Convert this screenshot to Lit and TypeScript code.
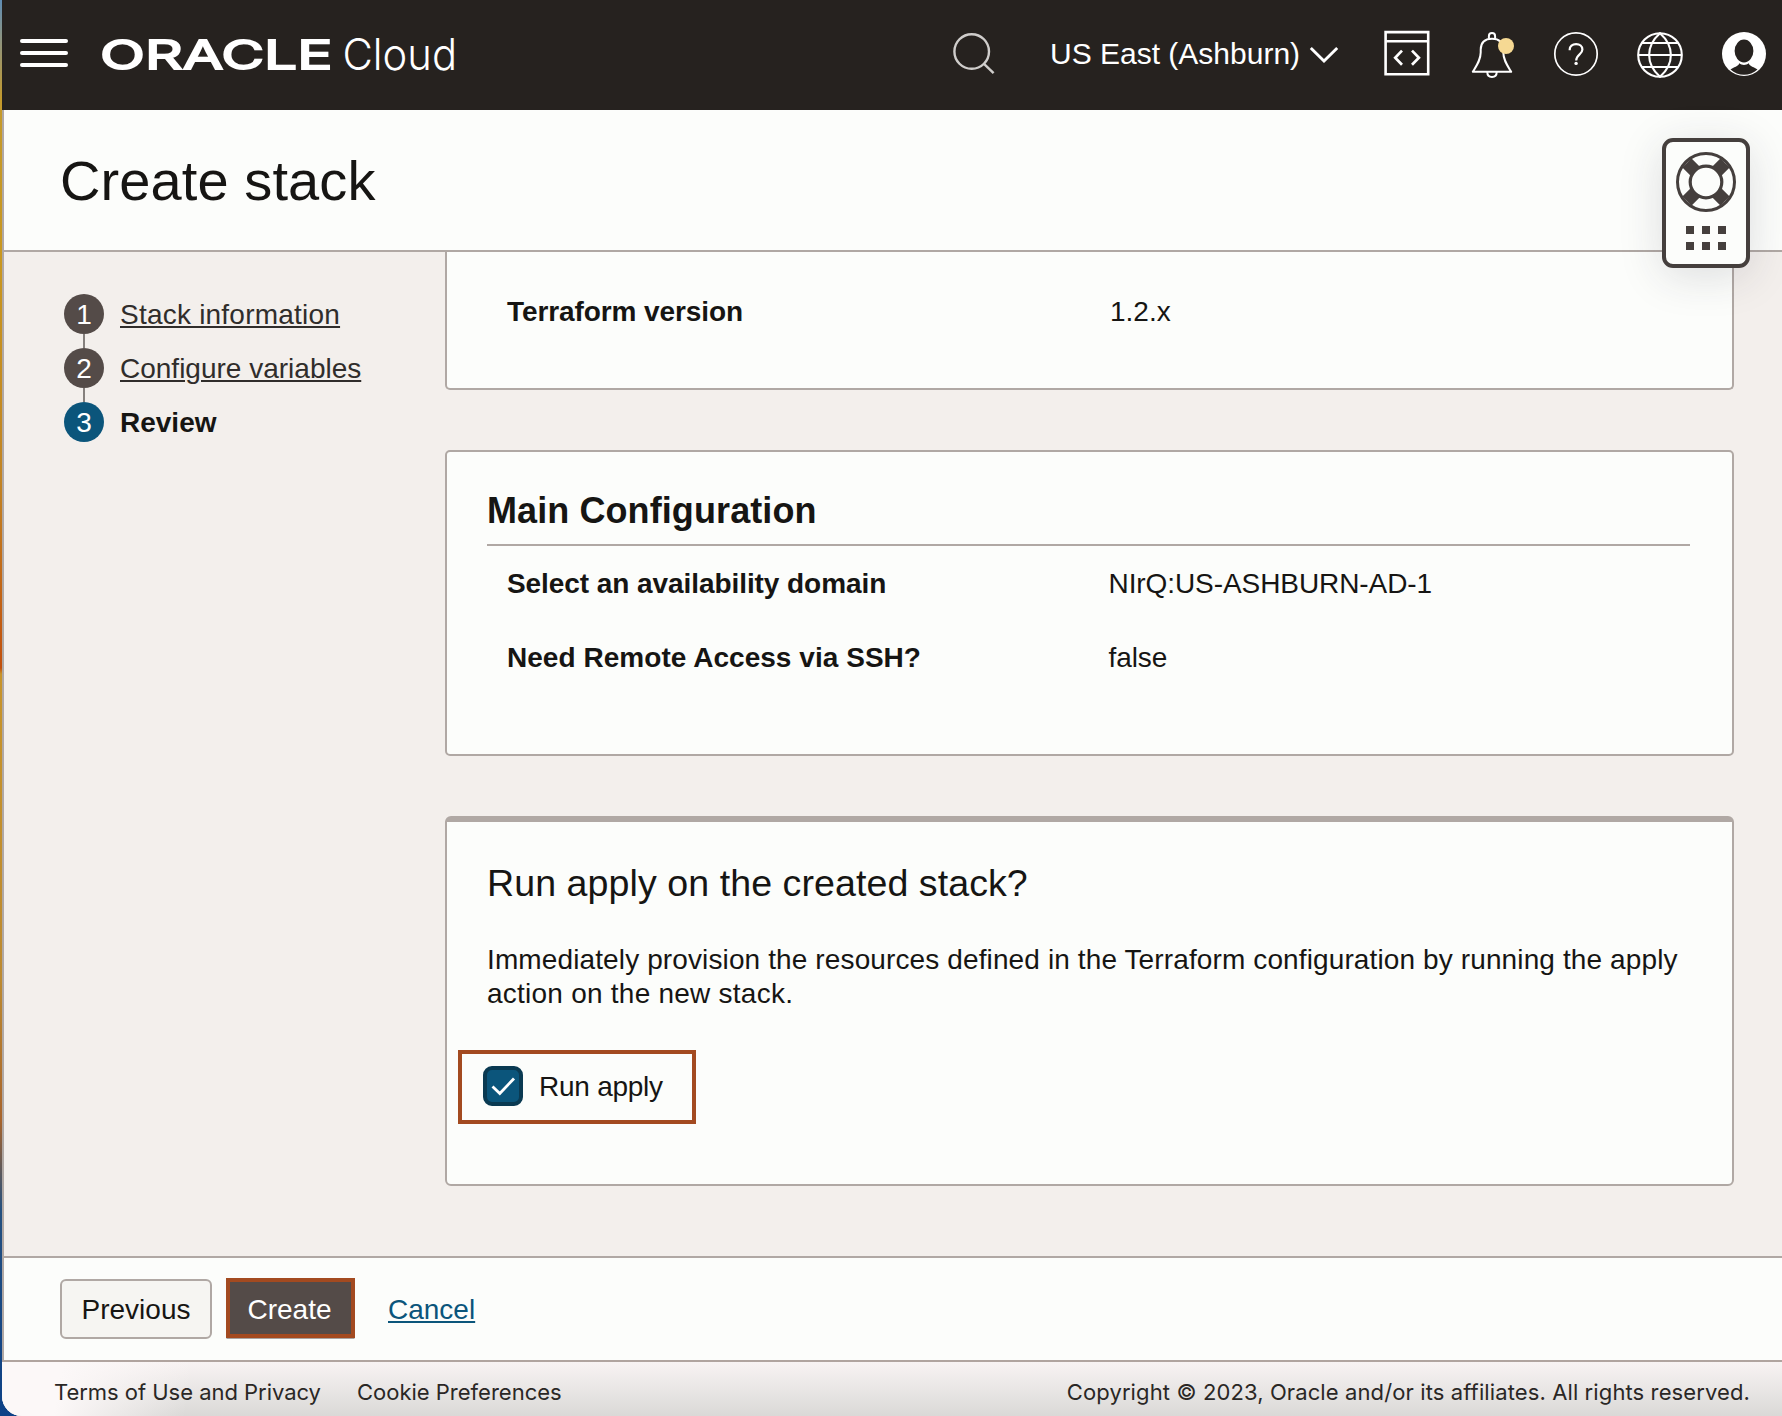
import { LitElement, html, css, svg } from "lit";
import { customElement, property, state } from "lit/decorators.js";
import { classMap } from "lit/directives/class-map.js";

/* Top bar icons share a 48x48 box. */
const icons = {
  search: svg`<g fill="none" stroke="#cfcdcb" stroke-width="2.4">
    <circle cx="21.7" cy="21.5" r="17.3"/><path d="M34 33.8 43.6 43.2"/></g>`,
  code: svg`<g fill="none" stroke="#fff" stroke-width="2.6">
    <path d="M1.6 2.1H44.2V44.2H1.6ZM1.6 11.3H44.2"/>
    <path d="M18 20.6 11.2 27.7 18 34.8M28 20.6 34.9 27.7 28 34.8" stroke-width="2.7"/></g>`,
  bell: svg`<g fill="none" stroke="#fff" stroke-width="2" stroke-linejoin="round">
    <path d="M4.8 41.8C9 35 12.6 30 12.7 22.5V19.5C12.9 12.5 17 8.8 24 8.8S35.1 12.5 35.3 19.5V22.5C35.4 30 39 35 43.2 41.8Z"/>
    <path d="M20.9 8.8V6.2A3.1 3.1 0 0 1 27.1 6.2V8.8"/>
    <path d="M19.3 42C19.3 45 21.3 46.9 24 46.9S28.7 45 28.7 42"/></g>
    <circle cx="38" cy="16" r="8" fill="#f6d993"/>`,
  help: svg`<g fill="none" stroke="#fff">
    <circle cx="24" cy="24" r="21.2" stroke-width="1.7"/>
    <path d="M17.7 20.2V19.6C17.7 16.2 20.3 14.2 24.1 14.2C27.8 14.2 30.4 16.4 30.4 19.6C30.4 24.6 24.2 24.2 24.2 30.6" stroke-width="2.2"/></g>
    <circle cx="24.1" cy="33.4" r="1.7" fill="#fff"/>`,
  globe: svg`<g fill="none" stroke="#fff" stroke-width="2.1">
    <circle cx="24" cy="25" r="21.8"/>
    <path d="M24 3.2C9.5 16 9.5 34 24 46.8C38.5 34 38.5 16 24 3.2ZM2.2 25H45.8M6 13H42M6 37H42"/></g>`,
  user: svg`<circle cx="24" cy="24" r="22" fill="#fff"/>
    <path d="M10.5 39.6C13.5 36.8 18.5 36.6 19.2 33.2C22 35.5 26 35.5 28.8 33.2C29.5 36.6 34.5 36.8 37.5 39.6C30 46.6 18 46.6 10.5 39.6Z" fill="#26221f"/>
    <ellipse cx="24" cy="21" rx="9.4" ry="11.4" fill="#26221f"/>`,
};

@customElement("oc-icon")
class OcIcon extends LitElement {
  static styles = css`
    :host { display: block; width: 48px; height: 48px; }
    svg { display: block; }
  `;
  @property() name: keyof typeof icons = "search";
  render() {
    return html`<svg width="48" height="48" viewBox="0 0 48 48">${icons[this.name]}</svg>`;
  }
}

@customElement("oc-topbar")
class OcTopbar extends LitElement {
  static styles = css`
    :host {
      display: flex; align-items: center; box-sizing: border-box; height: 110px;
      padding: 0 14px 2px 18px; background: #26221f; color: #fff;
      font-family: "Liberation Sans", Arial, sans-serif;
    }
    .menu { display: grid; gap: 8px; width: 48px; margin-right: 28px; padding-bottom: 2px; }
    .menu i { height: 4px; border-radius: 2px; background: #fff; }
    .logo { display: block; }
    .oracle { font: 370 40px Inter, sans-serif; fill: #fff; stroke: #fff; stroke-width: 1.8; }
    .cloud { font: 260 44px Inter, sans-serif; fill: #fff; }
    .search { margin-left: 484px; }
    .region { display: flex; align-items: center; gap: 9px; margin-left: 52px; font-size: 30px; line-height: 40px; white-space: nowrap; }
    .actions { display: flex; gap: 36px; margin-left: auto; }
  `;
  render() {
    return html`
      <div class="menu"><i></i><i></i><i></i></div>
      <svg class="logo" width="370" height="60" viewBox="0 0 370 60">
        <text class="oracle" x="4" y="45" textLength="232.5" lengthAdjust="spacingAndGlyphs">ORACLE</text>
        <text class="cloud" x="246.5" y="46" textLength="114.5" lengthAdjust="spacingAndGlyphs">Cloud</text>
      </svg>
      <oc-icon class="search" name="search"></oc-icon>
      <div class="region">
        <span>US East (Ashburn)</span>
        <svg width="30" height="18" viewBox="0 0 30 18"><path d="M1.8 3 15 16 28.2 3" fill="none" stroke="#fff" stroke-width="2.9"/></svg>
      </div>
      <div class="actions">
        ${(["code", "bell", "help", "globe", "user"] as const).map((n) => html`<oc-icon name=${n}></oc-icon>`)}
      </div>`;
  }
}

@customElement("oc-help-widget")
class OcHelpWidget extends LitElement {
  static styles = css`
    :host {
      display: flex; flex-direction: column; align-items: center; box-sizing: border-box;
      width: 88px; height: 130px; padding-top: 10px; gap: 14px;
      border: 4px solid #453f3d; border-radius: 11px; background: #fcfdfb;
      box-shadow: 0 8px 44px rgba(40, 40, 60, 0.15);
    }
    svg { display: block; }
    .dots { display: grid; grid-template-columns: repeat(3, 8px); gap: 8px; }
    .dots i { height: 8px; background: #453f3d; }
  `;
  render() {
    return html`
      <svg width="60" height="60" viewBox="0 0 60 60" fill="none" stroke="#453f3d">
        <path d="M11 11 20 20M49 11 40 20M11 49 20 40M49 49 40 40" stroke-width="13"/>
        <circle cx="30" cy="30" r="28.5" stroke-width="3"/>
        <circle cx="30" cy="30" r="15.8" stroke-width="3.2" fill="#fcfdfb"/>
      </svg>
      <div class="dots"><i></i><i></i><i></i><i></i><i></i><i></i></div>`;
  }
}

@customElement("oc-steps")
class OcSteps extends LitElement {
  static styles = css`
    :host { display: block; padding: 42px 0 0 60px; }
    .step { position: relative; display: flex; gap: 16px; height: 40px; margin-bottom: 14px; font-size: 28px; line-height: 42px; }
    .step:not(:last-child)::after { content: ""; position: absolute; left: 19px; top: 40px; width: 2px; height: 14px; background: #85807d; }
    .num { width: 40px; height: 40px; border-radius: 50%; background: #544b48; color: #fff; text-align: center; }
    a { color: #302d2b; text-decoration: underline; text-decoration-thickness: 2px; text-underline-offset: 2px; }
    .wide { letter-spacing: 0.22px; }
    .current { font-weight: 700; color: #161513; }
    .current .num { background: #0b557b; font-weight: 400; }
  `;
  @property({ attribute: false }) steps: string[] = [];
  @property({ type: Number }) current = 3;
  render() {
    return this.steps.map((label, i) => {
      const active = i + 1 === this.current;
      return html`<div class=${classMap({ step: true, current: active })}>
        <span class="num">${i + 1}</span>
        ${active ? html`<span>${label}</span>` : html`<a class=${classMap({ wide: i === 0 })}>${label}</a>`}
      </div>`;
    });
  }
}

@customElement("app-root")
class AppRoot extends LitElement {
  static styles = css`
    :host {
      display: block; box-sizing: border-box; height: 1416px; padding-left: 2px; overflow: hidden;
      color: #161513; font-family: "Liberation Sans", Arial, sans-serif; font-size: 28px;
      background: linear-gradient(#5f8db4 0, #8f9580 40px, #c49a2c 100px, #c9971f 260px, #c28424 480px, #c2500c 668px, #c8942a 674px, #bd8a30 980px, #a8642c 1120px, #24507f 1210px, #0d4187 1416px);
    }
    .window { position: relative; display: flex; flex-direction: column; height: 1416px; border-bottom-left-radius: 20px; overflow: hidden; background: #fcfdfb; }
    .page { flex: 1; display: flex; flex-direction: column; border-left: 2px solid #b0a8a4; min-height: 0; }
    .head { box-sizing: border-box; height: 142px; padding: 30px 0 0 56px; border-bottom: 2px solid #b0a8a4; }
    h1 { margin: 0; font-size: 56px; font-weight: 400; line-height: 81px; letter-spacing: 0.1px; }
    .help { position: absolute; left: 1660px; top: 138px; }
    .main { display: grid; grid-template-columns: 441px 1289px; flex: 1; min-height: 0; background: #f3efec; }
    .cards { display: flex; flex-direction: column; gap: 60px; }
    .card { box-sizing: border-box; border: 2px solid #b0a8a4; border-radius: 5px; background: #fcfdfb; padding: 0 42px 0 40px; }
    .first { height: 138px; border-top: 0; border-top-left-radius: 0; border-top-right-radius: 0; }
    .second { height: 306px; }
    .third { height: 370px; border-top-width: 6px; border-radius: 6px; }
    dl { display: grid; grid-template-columns: 601px 1fr; margin: 0; padding-left: 20px; }
    dt { font-weight: 700; line-height: 40px; }
    dd { margin: 0; line-height: 40px; }
    .first dl { padding-top: 40px; }
    .first dt { letter-spacing: -0.09px; }
    .first dd { padding-left: 2px; }
    .second dl { padding-top: 18px; row-gap: 34px; }
    .tight { letter-spacing: -0.07px; }
    .loose { letter-spacing: 0.04px; }
    .second dd { padding-left: 0.5px; letter-spacing: -0.08px; }
    h2 { box-sizing: border-box; height: 94px; margin: 0; padding-top: 38px; border-bottom: 2px solid #b0a8a4; font-size: 36px; font-weight: 700; line-height: 42px; letter-spacing: 0.09px; }
    h3 { margin: 0; padding-top: 40px; font-size: 37.6px; font-weight: 400; line-height: 42px; letter-spacing: 0.06px; }
    p { margin: 39px 0 0; line-height: 34px; white-space: nowrap; }
    p span { display: block; }
    .l1 { letter-spacing: 0.12px; }
    .l2 { letter-spacing: 0.24px; }
    .check { display: flex; align-items: center; gap: 16px; box-sizing: border-box; width: 238px; height: 74px; margin: 39px 0 0 -29px; padding: 0 0 0 21px; border: 4px solid #a34a20; letter-spacing: -0.25px; }
    .box { box-sizing: border-box; width: 40px; height: 40px; margin-top: -2px; border: 4px solid #0a3a52; border-radius: 9px; background: #0b557b; }
    .box svg { display: block; }
    .actions { box-sizing: border-box; display: flex; align-items: flex-start; height: 104px; padding: 21px 0 0 56px; border-top: 2px solid #b0a8a4; }
    button { box-sizing: border-box; height: 60px; font: inherit; padding: 2px 0 0; }
    .prev { width: 152px; border: 2px solid #b0a8a4; border-radius: 6px; background: #f6f5f2; color: #161513; }
    .create { width: 129px; margin: -1px 0 0 14px; border: 4px solid #a34a20; background: #544b48; color: #fff; box-shadow: 0 1px 0 -0.5px #544b48; padding: 4px 2px 0 0; }
    .cancel { margin-left: 33px; color: #0b557b; line-height: 62px; text-decoration: underline; text-decoration-thickness: 2px; text-underline-offset: 2px; }
    .footer {
      box-sizing: border-box; display: flex; align-items: center; height: 56px; padding: 6px 32px 0 52px;
      border-top: 2px solid #b0a49f; color: #2a2725; font: 22px/30px Inter, sans-serif; white-space: nowrap;
      background: linear-gradient(100deg, #fcf8f8 60px, rgba(252, 248, 248, 0) 190px), linear-gradient(#f8f3f3, #dad9d7);
    }
    .terms { letter-spacing: -0.03px; }
    .cookie { margin-left: 36px; }
    .copy { margin-left: auto; letter-spacing: 0.11px; }
  `;

  @state() private runApply = true;

  private toggle = () => { this.runApply = !this.runApply; };

  render() {
    return html`<div class="window">
      <oc-topbar></oc-topbar>
      <div class="page">
        <header class="head"><h1>Create stack</h1></header>
        <div class="main">
          <oc-steps .steps=${["Stack information", "Configure variables", "Review"]} .current=${3}></oc-steps>
          <div class="cards">
            <section class="card first">
              <dl><dt>Terraform version</dt><dd>1.2.x</dd></dl>
            </section>
            <section class="card second">
              <h2>Main Configuration</h2>
              <dl>
                <dt class="tight">Select an availability domain</dt><dd>NIrQ:US-ASHBURN-AD-1</dd>
                <dt class="loose">Need Remote Access via SSH?</dt><dd>false</dd>
              </dl>
            </section>
            <section class="card third">
              <h3>Run apply on the created stack?</h3>
              <p>
                <span class="l1">Immediately provision the resources defined in the Terraform configuration by running the apply</span>
                <span class="l2">action on the new stack.</span>
              </p>
              <div class="check" @click=${this.toggle}>
                <span class="box">${this.runApply
                  ? html`<svg width="32" height="32" viewBox="0 0 32 32"><path d="M5.5 16.5 12.8 23.5 27 8.5" fill="none" stroke="#fff" stroke-width="2.8"/></svg>`
                  : ""}</span>
                <span>Run apply</span>
              </div>
            </section>
          </div>
        </div>
        <div class="actions">
          <button class="prev">Previous</button>
          <button class="create">Create</button>
          <a class="cancel">Cancel</a>
        </div>
      </div>
      <footer class="footer">
        <span class="terms">Terms of Use and Privacy</span>
        <span class="cookie">Cookie Preferences</span>
        <span class="copy">Copyright © 2023, Oracle and/or its affiliates. All rights reserved.</span>
      </footer>
      <oc-help-widget class="help"></oc-help-widget>
    </div>`;
  }
}
